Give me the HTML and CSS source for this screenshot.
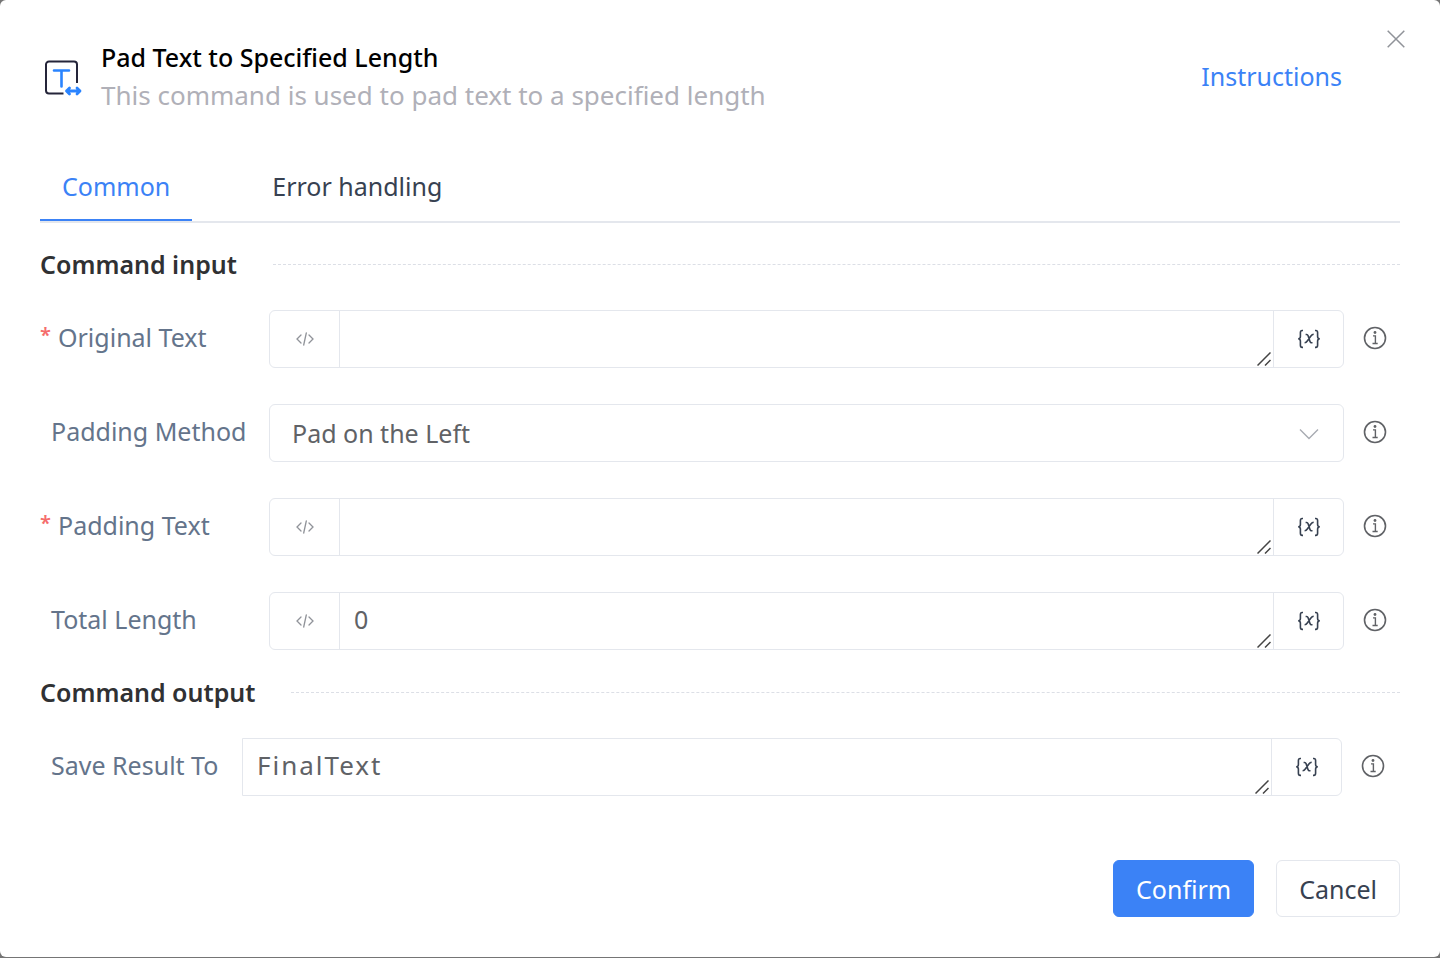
FILE: index.html
```html
<!DOCTYPE html>
<html lang="en">
<head>
<meta charset="utf-8">
<title>Pad Text to Specified Length</title>
<link rel="stylesheet" href="styles.css">
</head>
<body>
<svg class="sprite" aria-hidden="true">
  <symbol id="code" viewBox="0 0 18 14"><path d="M5 3 1 7l4 4M13 3l4 4-4 4M10.300 1 7.700 13" fill="none" stroke="currentColor" stroke-width="1.300" stroke-linecap="round"/></symbol>
  <symbol id="var" viewBox="0 0 24 20"><g fill="none" stroke="currentColor" stroke-width="1.600"><path d="M6 1.500H5.200C3.800 1.500 3.400 2.300 3.400 3.600v3.800c0 1.500-.6 2.300-2.200 2.400 1.600.1 2.200.9 2.200 2.400v4c0 1.400.4 2.200 1.800 2.200H6M18 1.500h.8c1.400 0 1.800.8 1.800 2.100v3.800c0 1.500.6 2.300 2.200 2.400-1.600.1-2.200.9-2.200 2.400v4c0 1.400-.4 2.200-1.800 2.200H18"/><path d="M8.600 5.500h1c.8 0 1.200.4 1.500 1.300l1.900 5.600c.3.900.7 1.300 1.500 1.300h1M16.700 5.300c-1.300 0-2 .6-3 1.900l-3.200 4.600c-.9 1.300-1.600 1.900-2.900 1.900"/></g></symbol>
  <symbol id="info" viewBox="0 0 24 24"><circle cx="12" cy="12" r="10.500" fill="none" stroke="currentColor" stroke-width="1.600"/><path d="M10 9.900h2.400v7.500M9.500 17.500h5.200" fill="none" stroke="currentColor" stroke-width="1.400"/><circle cx="12" cy="6.500" r="1.400" fill="currentColor"/></symbol>
  <symbol id="grip" viewBox="0 0 14 14"><path d="M.5 13.500l13-13M8 13.500l5.500-5.500" fill="none" stroke="currentColor" stroke-width="1.500"/></symbol>
</svg>
<main class="dialog" role="dialog" aria-labelledby="title">
  <button class="close" type="button" aria-label="Close"><svg width="18" height="18" viewBox="0 0 18 18"><path d="M.7.7l16.600 16.600M17.300.7.700 17.300" stroke="currentColor" stroke-width="1.500"/></svg></button>
  <header class="header">
    <svg class="logo" viewBox="0 0 38 36" fill="none"><path d="M33 23V4.500a3 3 0 0 0-3-3H5a3 3 0 0 0-3 3v26a3 3 0 0 0 3 3h14.500" stroke="#25253a" stroke-width="2"/><g stroke="#2a84ff"><path d="M10 10.500h15M17.500 10.500v16" stroke-width="2.600" stroke-linecap="round"/><path d="M22.500 31h13.500M25.500 28 22.500 31l3 3M33 28l3 3-3 3" stroke-width="2.800" stroke-linecap="round" stroke-linejoin="round"/></g></svg>
    <div class="heading">
      <h1 class="title" id="title">Pad Text to Specified Length</h1>
      <p class="subtitle">This command is used to pad text to a specified length</p>
    </div>
    <a class="instructions" href="#">Instructions</a>
  </header>
  <nav class="tabs" role="tablist">
    <button class="tab active" type="button" role="tab" aria-selected="true">Common</button>
    <button class="tab" type="button" role="tab" aria-selected="false">Error handling</button>
  </nav>
  <form class="form">
    <h2 class="section">Command input</h2>
    <div class="row">
      <label class="label" for="original"><span class="required">*</span>Original Text</label>
      <div class="field"><button class="code" type="button" aria-label="Code mode"><svg><use href="#code"/></svg></button><div class="entry"><textarea id="original" rows="1"></textarea><svg class="grip"><use href="#grip"/></svg></div><button class="variable" type="button" aria-label="Insert variable"><svg><use href="#var"/></svg></button></div>
      <svg class="info"><use href="#info"/></svg>
    </div>
    <div class="row">
      <label class="label optional" for="method">Padding Method</label>
      <div class="field select"><select id="method"><option>Pad on the Left</option></select><svg class="chevron" viewBox="0 0 20 12"><path d="M1 1.500l9 9 9-9" fill="none" stroke="currentColor" stroke-width="1.400"/></svg></div>
      <svg class="info"><use href="#info"/></svg>
    </div>
    <div class="row">
      <label class="label" for="padding"><span class="required">*</span>Padding Text</label>
      <div class="field"><button class="code" type="button" aria-label="Code mode"><svg><use href="#code"/></svg></button><div class="entry"><textarea id="padding" rows="1"></textarea><svg class="grip"><use href="#grip"/></svg></div><button class="variable" type="button" aria-label="Insert variable"><svg><use href="#var"/></svg></button></div>
      <svg class="info"><use href="#info"/></svg>
    </div>
    <div class="row">
      <label class="label optional" for="length">Total Length</label>
      <div class="field"><button class="code" type="button" aria-label="Code mode"><svg><use href="#code"/></svg></button><div class="entry"><textarea id="length" rows="1">0</textarea><svg class="grip"><use href="#grip"/></svg></div><button class="variable" type="button" aria-label="Insert variable"><svg><use href="#var"/></svg></button></div>
      <svg class="info"><use href="#info"/></svg>
    </div>
    <h2 class="section">Command output</h2>
    <div class="row output">
      <label class="label optional" for="result">Save Result To</label>
      <div class="field"><div class="entry"><textarea id="result" rows="1">FinalText</textarea><svg class="grip"><use href="#grip"/></svg></div><button class="variable" type="button" aria-label="Insert variable"><svg><use href="#var"/></svg></button></div>
      <svg class="info"><use href="#info"/></svg>
    </div>
    <footer class="footer">
      <button class="button primary" type="submit">Confirm</button>
      <button class="button" type="button">Cancel</button>
    </footer>
  </form>
</main>
</body>
</html>
```
FILE: styles.css
```css
* { box-sizing: border-box; }
body {
  margin: 0;
  background: #757575;
  font-family: "Noto Sans", "Open Sans", sans-serif;
  font-size: 25px;
  line-height: 36px;
}
button, textarea, select { font: inherit; color: inherit; }
button { padding: 0; border: 0; background: none; cursor: pointer; }
h1, h2, p { margin: 0; }
svg { display: block; flex: none; }
.sprite { position: absolute; width: 0; height: 0; }
.dialog {
  position: relative;
  min-height: calc(100vh - 1px);
  padding: 38px 40px 40px;
  border-radius: 6px;
  background: #fff;
}
.close { position: absolute; top: 29px; right: 34px; padding: 1px; color: #909399; }
.header { display: flex; align-items: center; padding: 0 58px 0 4px; }
.logo { width: 38px; height: 36px; margin-top: 4px; }
.heading { flex: 1; padding-left: 19px; }
.title { font-size: 25px; line-height: 38px; font-weight: 500; color: #000; }
.subtitle { font-size: 26px; line-height: 38px; color: #b0b0b8; }
.instructions { color: #3b82f6; text-decoration: none; }
.tabs { display: flex; gap: 58px; margin-top: 38px; border-bottom: 2px solid #e4e7ed; }
.tab { height: 69px; padding: 0 22px; color: #374151; border-bottom: 2px solid transparent; }
.active { color: #3b82f6; border-bottom-color: #3b82f6; }
.section {
  display: flex;
  align-items: center;
  gap: 36px;
  font-size: 25px;
  font-weight: 600;
  color: #303133;
}
.section::after { content: ""; flex: 1; border-top: 1px dashed #dcdfe6; }
.form { padding-top: 23px; }
.row { display: flex; align-items: center; padding-right: 13px; margin-top: 36px; }
.section + .row { margin-top: 28px; }
.row + .section { margin-top: 24px; }
.label { display: flex; width: 229px; padding-bottom: 4px; color: #64748b; }
.required { width: 18px; color: #f56c6c; font-size: 20px; line-height: 32px; font-weight: 600; }
.optional { padding-left: 11px; }
.field {
  display: flex;
  flex: 1;
  height: 58px;
  border: 1px solid #e4e7ed;
  border-radius: 6px;
  color: #606266;
}
.code, .variable { display: grid; place-items: center; width: 69px; }
.code { color: #909399; }
.code svg { width: 18px; height: 14px; }
.variable { color: #374151; }
.variable svg { width: 24px; height: 20px; }
.entry { position: relative; display: flex; flex: 1; border: 0 solid #e4e7ed; border-width: 0 1px; }
textarea {
  flex: 1;
  min-width: 0;
  padding: 8px 14px;
  border: 0;
  outline: 0;
  background: none;
  resize: none;
  overflow: hidden;
}
.grip { position: absolute; right: 2px; bottom: 1px; width: 14px; height: 14px; color: #444; }
.select { position: relative; }
select { flex: 1; padding: 0 22px; border: 0; outline: 0; background: none; appearance: none; }
.chevron { position: absolute; top: 23px; right: 24px; width: 20px; height: 12px; color: #a8abb2; pointer-events: none; }
.info { width: 24px; height: 24px; margin: 0 0 2px 19px; color: #606266; }
.output { padding-right: 15px; }
.output .label { width: 202px; }
.output .field { border-radius: 0 6px 6px 0; }
.output .entry { border-left: 0; }
#result { font-size: 26px; letter-spacing: 2px; }
.footer { display: flex; justify-content: flex-end; gap: 22px; margin-top: 64px; }
.button {
  height: 57px;
  padding: 0 22px;
  border: 1px solid #e4e7ed;
  border-radius: 6px;
  color: #374151;
}
.primary { border-color: #3b82f6; background: #3b82f6; color: #fff; }
```
